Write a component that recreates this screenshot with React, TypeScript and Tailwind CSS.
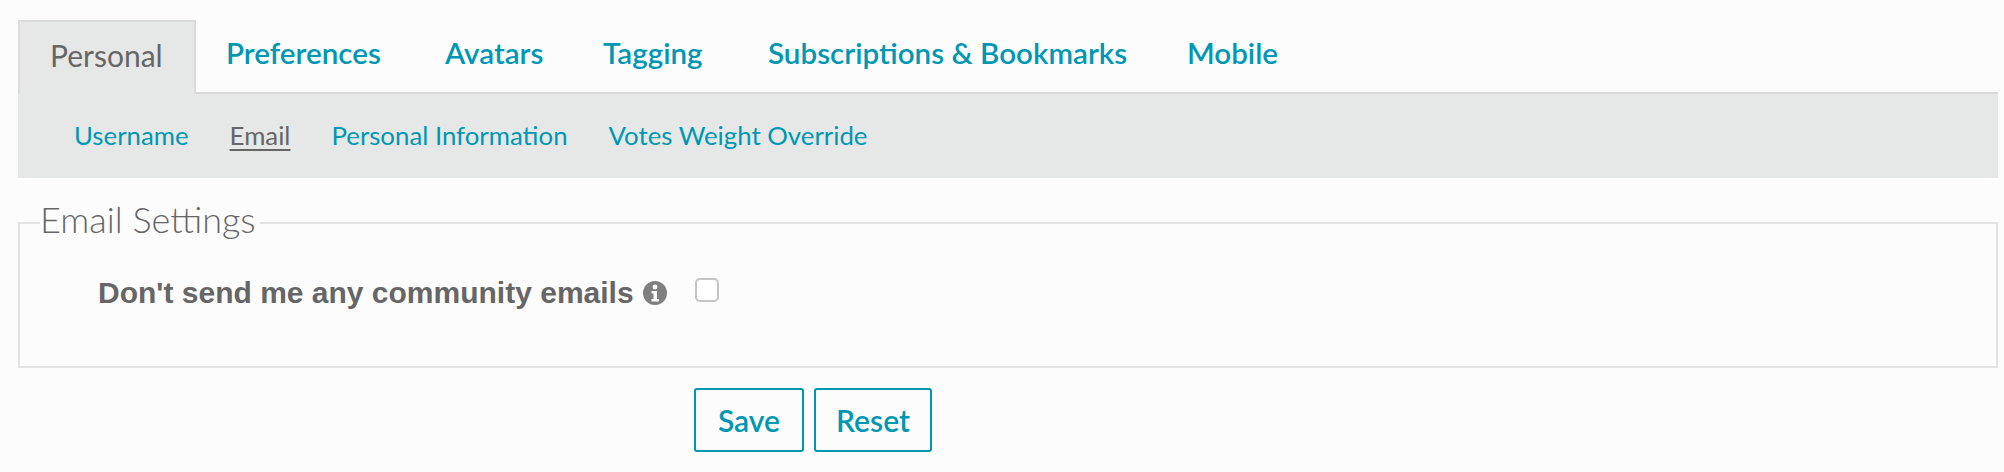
import React from 'react'

const tabs = [
  { label: 'Preferences', width: 'w-[219px]' },
  { label: 'Avatars', width: 'w-[158px]' },
  { label: 'Tagging', width: 'w-[165px]' },
  { label: 'Subscriptions & Bookmarks', width: 'w-[419px]' },
  { label: 'Mobile', width: 'w-[100px]' },
]
const subLinks = ['Personal Information', 'Votes Weight Override']

const InfoIcon = () => (
  <svg className="w-6 h-6 shrink-0" viewBox="0 0 24 24">
    <circle cx="12" cy="12" r="12" fill="#808080" />
    <circle cx="12" cy="6" r="2.4" fill="#fcfcfc" />
    <path d="M8.5 10h5.5v8h2v2.4H8.5V18h2v-5.6h-2z" fill="#fcfcfc" />
  </svg>
)

export default function App() {
  return (
    <div className="w-[2004px] h-[472px] bg-[#fcfcfc] pt-5 px-[6px] overflow-hidden font-['Lato',sans-serif]">
      <div className="ml-3 w-[1980px]">
        <div className="flex h-[74px] text-[29.6px] text-[#0097b2] font-semibold">
          <div className="w-[178px] h-[74px] pl-[30px] pt-[13px] leading-[40px] text-[30px] bg-[#e6e7e7] border-2 border-b-0 border-[#dcdcdc] text-[#666666] font-normal">
            Personal
          </div>
          <div className="flex-1 flex pl-[30px] pt-[13px] leading-[40px] border-b-2 border-[#d8dada]">
            {tabs.map((tab) => (
              <a key={tab.label} className={`${tab.width} whitespace-nowrap`}>
                {tab.label}
              </a>
            ))}
          </div>
        </div>
        <div className="h-[84px] bg-[#e6e7e7] pl-[56px] pt-[25px] flex gap-[41px] text-[25.8px] leading-[32px] text-[#0097b2]">
          <a>Username</a>
          <a className="text-[#666666] underline underline-offset-4">Email</a>
          {subLinks.map((link) => (
            <a key={link} className="whitespace-nowrap">
              {link}
            </a>
          ))}
        </div>

        <fieldset className="mt-[21px] h-[169px] border-2 border-[#e3e3e3] pl-[20px]">
          <legend className="px-0 pr-1 pb-2 text-[36px] leading-[40px] font-light text-[#666666]">Email Settings</legend>
          <div className="flex items-center mt-[26px] pl-[58px]">
            <span className="text-[30px] leading-[40px] font-bold text-[#666666] font-['Liberation_Sans',sans-serif] whitespace-nowrap">
              Don't send me any community emails
            </span>
            <span className="ml-[9px]">
              <InfoIcon />
            </span>
            <input
              type="checkbox"
              className="ml-[28px] -mt-[6px] w-6 h-6 appearance-none rounded-[5px] border-2 border-[#c4c4c4] bg-white"
            />
          </div>
        </fieldset>

        <div className="mt-5 ml-[676px] flex gap-[10px] text-[30px] font-semibold text-[#0097b2]">
          <button className="w-[110px] h-16 border-2 border-[#0097b2] rounded-[3px]">Save</button>
          <button className="w-[118px] h-16 border-2 border-[#0097b2] rounded-[3px]">Reset</button>
        </div>
      </div>
    </div>
  )
}
